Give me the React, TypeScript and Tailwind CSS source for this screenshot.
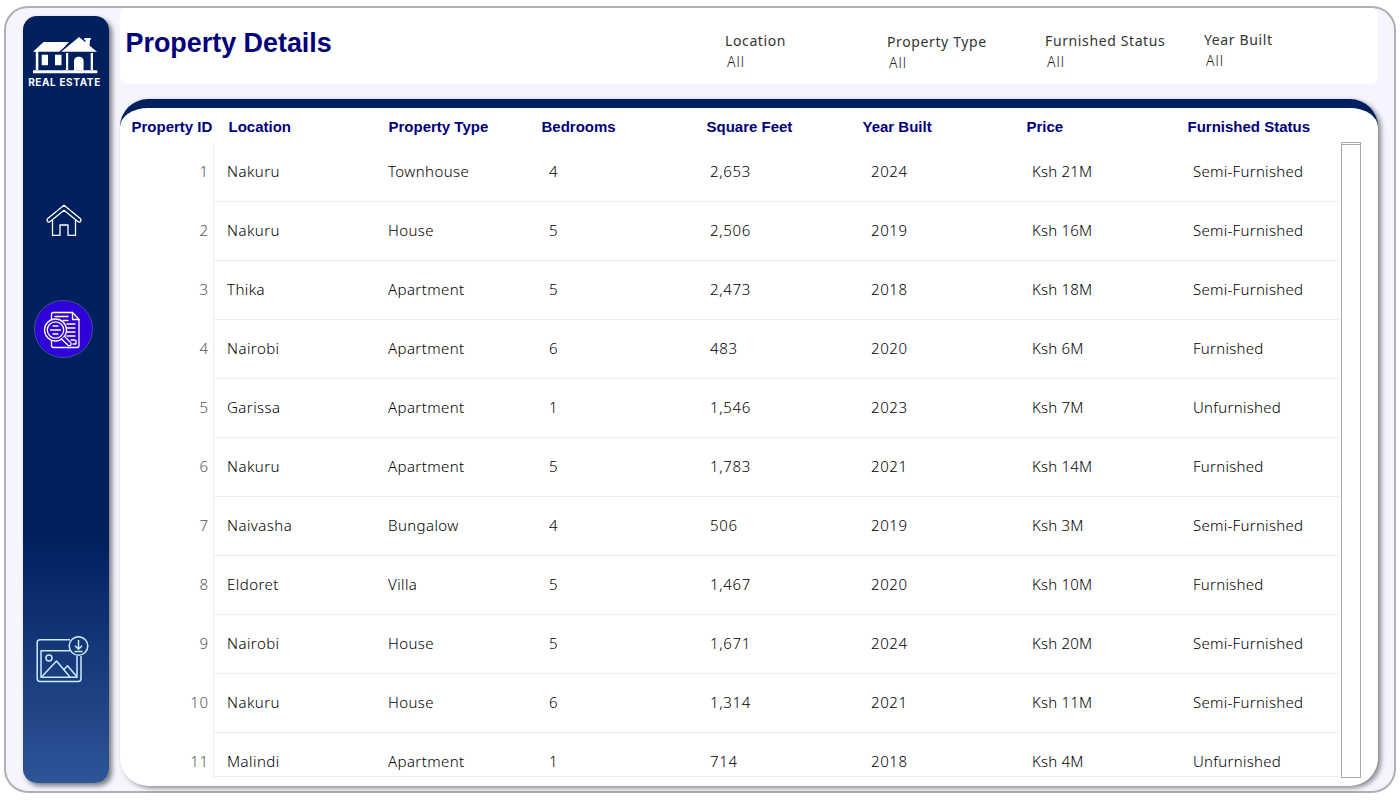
const rows: string[][] = [
  ["1", "Nakuru", "Townhouse", "4", "2,653", "2024", "Ksh 21M", "Semi-Furnished"],
  ["2", "Nakuru", "House", "5", "2,506", "2019", "Ksh 16M", "Semi-Furnished"],
  ["3", "Thika", "Apartment", "5", "2,473", "2018", "Ksh 18M", "Semi-Furnished"],
  ["4", "Nairobi", "Apartment", "6", "483", "2020", "Ksh 6M", "Furnished"],
  ["5", "Garissa", "Apartment", "1", "1,546", "2023", "Ksh 7M", "Unfurnished"],
  ["6", "Nakuru", "Apartment", "5", "1,783", "2021", "Ksh 14M", "Furnished"],
  ["7", "Naivasha", "Bungalow", "4", "506", "2019", "Ksh 3M", "Semi-Furnished"],
  ["8", "Eldoret", "Villa", "5", "1,467", "2020", "Ksh 10M", "Furnished"],
  ["9", "Nairobi", "House", "5", "1,671", "2024", "Ksh 20M", "Semi-Furnished"],
  ["10", "Nakuru", "House", "6", "1,314", "2021", "Ksh 11M", "Semi-Furnished"],
  ["11", "Malindi", "Apartment", "1", "714", "2018", "Ksh 4M", "Unfurnished"],
];

const tracking = [
  "tracking-[0.45px]",
  "tracking-[0.4px]",
  "tracking-[0.3px]",
  "tracking-[0.65px]",
  "tracking-[0.6px]",
  "tracking-[0.2px]",
  "tracking-[0.28px]",
];

const filters = [
  { label: "Location", box: "w-[162px] pt-[24px]" },
  { label: "Property Type", box: "w-[158px] pt-[25px]" },
  { label: "Furnished Status", box: "w-[159px] pt-[24px]" },
  { label: "Year Built", box: "w-[120px] pt-[23px]" },
];

function Logo() {
  return (
    <svg className="mt-[20px] h-[38px] w-[66px] shrink-0" viewBox="0 0 66 38" fill="#fff">
      <path d="M10.5 6H36L27 15.8H0Z" />
      <path d="M2.8 15H5.3V34H2.8ZM33 15H35.2V34H33ZM57.7 15H60V34H57.7Z" />
      <path d="M8.7 18.8H15V29.2H8.7ZM22 18.8H28.5V29.2H22Z" />
      <path d="M0 34.2H64.3V37.2H0Z" />
      <path d="M51.5 2H57.5V4H56.6V10L52.4 6.5V4H51.5Z" />
      <path d="M46 1L28.3 15.8H64Z" stroke="#001f5f" strokeWidth="2.6" paintOrder="stroke" />
      <path d="M51.5 2H57.5V4H56.6V10L52.4 6.5V4H51.5Z" />
      <path d="M41 34.5V25C41 19.2 50.6 19.2 50.6 25V34.5Z" />
    </svg>
  );
}

function HomeIcon() {
  return (
    <svg className="h-[34px] w-[38px]" viewBox="0 0 38 34" fill="none" stroke="#fff" strokeWidth="1.3" strokeLinejoin="round">
      <path d="M19 1.2L2.8 14.5C.9 16.4 3 19.3 5.2 17.6L19 6.2L32.8 17.6C35 19.3 37.1 16.4 35.2 14.5Z" />
      <path d="M7.5 16V31.3H15V21H23V31.3H30.5V16" />
    </svg>
  );
}

function ReportIcon() {
  return (
    <svg className="h-[38px] w-[38px]" viewBox="0 0 38 38" fill="none" stroke="#fff" strokeWidth="1.3" strokeLinejoin="round" strokeLinecap="round">
      <path d="M8.5 8V3.5Q8.5 1.5 10.5 1.5H29.5L36 8.5V34.5Q36 36.5 34 36.5H10.5Q8.5 36.5 8.5 34.5V30" />
      <path d="M29.5 1.5V8.5H36" />
      <path d="M12 5.5H25M20 9.5H25M24 13H32M24 17H32M24 21H32M24 25H32M28 29H32M30 33H33V29.5" />
      <circle cx="12.5" cy="19" r="11" fill="#3000d8" />
      <circle cx="12.5" cy="19" r="8.2" />
      <path d="M10 15H15M7.5 19H17.5M10 23H15" />
      <path d="M18.5 28L25 34.3Q28.6 35.8 28 31.9L21.6 25.5" fill="#3000d8" />
    </svg>
  );
}

function ImageDownloadIcon() {
  return (
    <svg className="h-[47px] w-[53px]" viewBox="0 0 53 47" fill="none" stroke="#c9ecf5" strokeWidth="1.5" strokeLinejoin="round">
      <path d="M34 3.8H4Q1.2 3.8 1.2 6.6V42.5Q1.2 45.5 4 45.5H42.3Q45 45.5 45 42.5V20" />
      <path d="M34 14.7H5V41.3H41V20" />
      <circle cx="13" cy="22" r="3" />
      <path d="M5.5 41L20.5 25L34 41M27.5 34L31.5 29.7L41 40.8" />
      <circle cx="42.5" cy="10" r="9.3" />
      <path d="M42.5 4V13M39 9.8L42.5 13.3L46 9.8M38.5 15.5H46.5" />
    </svg>
  );
}

export default function App() {
  return (
    <div className="h-[800px] w-[1400px] overflow-hidden bg-white pl-[4px] pt-[6px] font-['Noto_Sans','Open_Sans',sans-serif]">
      <div className="flex h-[787px] w-[1392px] rounded-[24px] border-2 border-[#b0b0b0] bg-[#f5f5ff]">
        <aside className="ml-[17px] mt-[8px] flex h-[767px] w-[86px] shrink-0 flex-col items-center rounded-[14px] bg-[linear-gradient(to_bottom,#001f5f_0%,#001f5f_68%,#2d5598_100%)] shadow-[3px_3px_5px_0_rgba(0,0,0,0.5)]">
          <Logo />
          <div className="mr-[3px] mt-[2px] whitespace-nowrap font-['Inter','Liberation_Sans',sans-serif] text-[10px] font-bold leading-[12px] tracking-[0.62px] text-white">REAL ESTATE</div>
          <div className="mr-[5px] mt-[116px] h-[34px]"><HomeIcon /></div>
          <div className="mr-[5px] mt-[62px] flex h-[58px] w-[59px] shrink-0 items-center justify-center rounded-full border border-[#38568d] bg-[#3000d8]">
            <div className="mr-[4px] mt-[2px]"><ReportIcon /></div>
          </div>
          <div className="mr-[7px] mt-[278px]"><ImageDownloadIcon /></div>
        </aside>

        <main className="ml-[11px] w-[1258px]">
          <header className="flex h-[76px] rounded-[8px] bg-white pl-[5.5px]">
            <h1 className="w-[599.5px] pt-[19px] font-['Liberation_Sans',sans-serif] text-[26.9px] font-bold leading-[32px] text-[#00007b]">Property Details</h1>
            {filters.map((f) => (
              <div key={f.label} className={`shrink-0 whitespace-nowrap ${f.box}`}>
                <div className="text-[14px] leading-[18px] tracking-[0.62px] text-[#333]">{f.label}</div>
                <div className="pl-[2px] pt-[2px] text-[14px] font-light leading-[20px] tracking-[1px] text-[#222]">All</div>
              </div>
            ))}
          </header>

          <section className="mt-[15px] h-[687px] rounded-[28px] border-t-[9px] border-[#001f5f] bg-white shadow-[3px_2px_5px_0_rgba(0,0,0,0.45)]">
            <div className="flex h-[34px] whitespace-nowrap pl-[11.5px] pt-[9px] font-['Liberation_Sans',sans-serif] text-[15px] font-bold leading-[20px] text-[#00007b]">
              <div className="w-[97px]">Property ID</div>
              <div className="w-[160px]">Location</div>
              <div className="w-[153px]">Property Type</div>
              <div className="w-[165px]">Bedrooms</div>
              <div className="w-[156px]">Square Feet</div>
              <div className="w-[164px]">Year Built</div>
              <div className="w-[161px]">Price</div>
              <div>Furnished Status</div>
            </div>
            <div className="flex h-[636px]">
              <div className="h-[635px] w-[1220px] overflow-hidden">
                {rows.map((r, n) => (
                  <div key={r[0]} className={n === 10 ? "flex h-[44px]" : n === 0 ? "flex h-[60px]" : "flex h-[59px]"}>
                    <div className={`w-[88.5px] shrink-0 text-right text-[15px] font-light leading-[20px] tracking-[0.5px] text-[#555] ${n === 0 ? "pt-[19px]" : "pt-[18px]"}`}>{r[0]}</div>
                    <div className={`ml-[4.5px] flex w-[1127px] border-b border-l border-[#eeeeee] pl-[13px] ${n === 0 ? "pt-[19px]" : "pt-[18px]"}`}>
                      {r.slice(1).map((c, i) => (
                        <div key={i} className={`w-[161px] shrink-0 whitespace-nowrap text-[15px] font-light leading-[20px] text-black ${tracking[i]}`}>{c}</div>
                      ))}
                    </div>
                  </div>
                ))}
              </div>
              <div className="ml-px h-[636px] w-[20px] border border-[#aaa] bg-white">
                <div className="h-[2px] border-b border-[#aaa]" />
              </div>
            </div>
          </section>
        </main>
      </div>
    </div>
  );
}
